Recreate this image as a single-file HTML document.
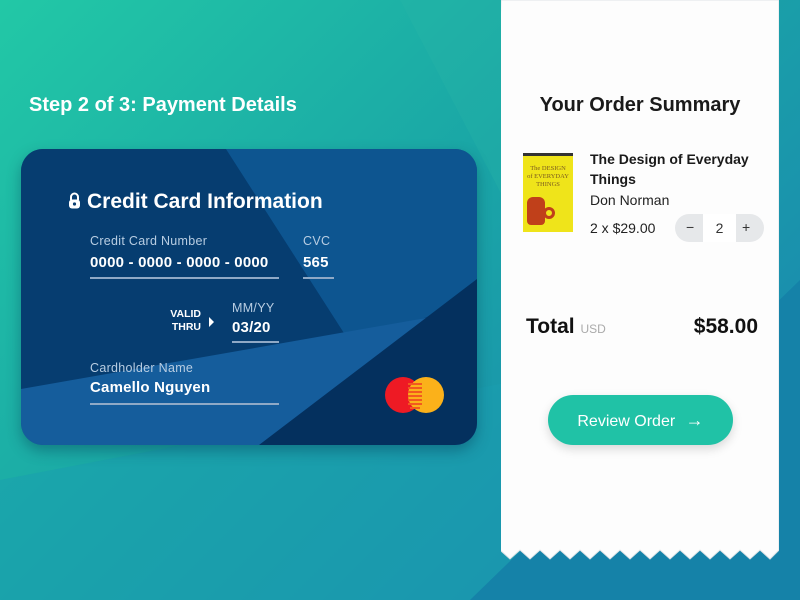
<!DOCTYPE html>
<html><head><meta charset="utf-8"><style>
*{margin:0;padding:0;box-sizing:border-box}
body{width:800px;height:600px;overflow:hidden;position:relative;font-family:"Liberation Sans",sans-serif;background:linear-gradient(135deg,#22c8a6 0%,#1aa6a6 45%,#1a8eae 80%,#1580a8 100%)}
.abs{position:absolute}
.t{color:#fff}
.lbl{font-size:12.5px;color:#b8cde2;letter-spacing:.3px}
.val{font-size:15px;font-weight:bold;color:#fff;letter-spacing:.2px}
.line{height:2px;background:#8fa9c6}
</style></head><body>
<svg class="abs" style="left:0;top:0" width="800" height="600">
<polygon points="400,0 520,0 520,230" fill="#2ab9a8" opacity=".25"/>
<polygon points="0,480 520,380 520,600 0,600" fill="#1a9db0" opacity=".5"/>
<polygon points="470,600 800,280 800,600" fill="#1582a8"/>
</svg>
<div class="abs t" style="left:29px;top:94px;font-size:20px;font-weight:bold">Step 2 of 3: Payment Details</div>
<div class="abs" style="left:21px;top:149px;width:456px;height:296px;border-radius:22px;overflow:hidden;box-shadow:0 6px 14px rgba(0,40,70,.35)">
<svg width="456" height="296" class="abs" style="left:0;top:0">
<rect width="456" height="296" fill="#0c4880"/>
<polygon points="0,0 205,0 330,195 0,245" fill="#063d70"/>
<polygon points="205,0 456,0 456,150 330,195" fill="#0d5590"/>
<polygon points="0,240 456,160 456,296 0,296" fill="#155d9c"/>
<polygon points="456,130 456,296 238,296" fill="#04305e"/>
</svg>
<div class="abs t" style="left:47px;top:41px;font-size:21px;font-weight:bold">
<svg width="13" height="17" viewBox="0 0 13 17" style="vertical-align:-1px;margin-right:6px"><path d="M3 8V5a3.5 3.5 0 0 1 7 0v3" stroke="#fff" stroke-width="2" fill="none"/><rect x="1" y="7.5" width="11" height="9" rx="3" fill="#fff"/><circle cx="6.5" cy="12" r="1.6" fill="#0a3e72"/></svg>Credit Card Information</div>
<div class="abs lbl" style="left:69px;top:85px">Credit Card Number</div>
<div class="abs val" style="left:69px;top:105px">0000 - 0000 - 0000 - 0000</div>
<div class="abs line" style="left:69px;top:128px;width:189px"></div>
<div class="abs lbl" style="left:282px;top:85px">CVC</div>
<div class="abs val" style="left:282px;top:105px">565</div>
<div class="abs line" style="left:282px;top:128px;width:31px"></div>
<div class="abs t" style="left:140px;top:159px;font-size:10.5px;font-weight:bold;text-align:right;width:40px;line-height:13px">VALID<br>THRU</div>
<div class="abs" style="left:188px;top:168px;width:0;height:0;border-left:5px solid #fff;border-top:5px solid transparent;border-bottom:5px solid transparent"></div>
<div class="abs lbl" style="left:211px;top:152px">MM/YY</div>
<div class="abs val" style="left:211px;top:170px">03/20</div>
<div class="abs line" style="left:211px;top:192px;width:47px"></div>
<div class="abs lbl" style="left:69px;top:212px">Cardholder Name</div>
<div class="abs val" style="left:69px;top:230px">Camello Nguyen</div>
<div class="abs line" style="left:69px;top:254px;width:189px"></div>
<svg class="abs" style="left:364px;top:227px" width="60" height="38"><circle cx="18" cy="19" r="18" fill="#ee1a24"/><circle cx="41" cy="19" r="18" fill="#fbb11a"/><g stroke="#f25a1f" stroke-width="2"><line x1="23" y1="8" x2="37" y2="8"/><line x1="23" y1="12" x2="37" y2="12"/><line x1="23" y1="16" x2="37" y2="16"/><line x1="23" y1="20" x2="37" y2="20"/><line x1="23" y1="24" x2="37" y2="24"/><line x1="23" y1="28" x2="37" y2="28"/><line x1="25" y1="32" x2="35" y2="32"/></g></svg>
</div>
<svg class="abs" style="left:501px;top:0" width="278" height="562"><path d="M0 0H278V550 l-9 9 l-10 -9 l-10 9 l-10 -9 l-10 9 l-10 -9 l-10 9 l-10 -9 l-10 9 l-10 -9 l-10 9 l-10 -9 l-10 9 l-10 -9 l-10 9 l-10 -9 l-10 9 l-10 -9 l-10 9 l-10 -9 l-10 9 l-10 -9 l-10 9 l-10 -9 l-10 9 l-10 -9 l-10 9 l-10 -9 l-10 9 l-9 -9Z" fill="#fdfdfd" stroke="#dfe3e6" stroke-width="1"/></svg>
<div class="abs" style="left:501px;top:94px;width:278px;text-align:center;font-size:20px;font-weight:bold;color:#1a1a1a">Your Order Summary</div>
<div class="abs" style="left:523px;top:153px;width:50px;height:79px;background:#efe41a;overflow:hidden">
<div style="height:3px;background:#333"></div>
<div style="font-family:'Liberation Serif',serif;font-size:6.5px;color:#7a5a20;text-align:center;line-height:8px;margin-top:9px">The DESIGN<br>of EVERYDAY<br>THINGS</div>
<div class="abs" style="left:4px;top:44px;width:18px;height:28px;background:#c0401a;border-radius:6px 6px 4px 4px"></div>
<div class="abs" style="left:20px;top:54px;width:12px;height:12px;border:3px solid #c0401a;border-radius:50%"></div></div>
<div class="abs" style="left:590px;top:149px;font-size:14px;font-weight:bold;line-height:20px;color:#1a1a1a">The Design of Everyday<br>Things</div>
<div class="abs" style="left:590px;top:192px;font-size:14px;color:#222">Don Norman</div>
<div class="abs" style="left:590px;top:220px;font-size:14px;color:#222">2 x $29.00</div>
<div class="abs" style="left:675px;top:214px;width:89px;height:28px;border-radius:14px;background:#e6e8ea;font-size:14px;color:#333">
<span class="abs" style="left:11px;top:5px">−</span><div class="abs" style="left:28px;top:0;width:33px;height:28px;background:#fff;text-align:center;line-height:28px">2</div><span class="abs" style="left:67px;top:5px">+</span></div>
<div class="abs" style="left:526px;top:315px;font-size:21px;font-weight:bold;color:#111">Total <span style="font-size:12px;color:#aaa;font-weight:normal">USD</span></div>
<div class="abs" style="left:640px;top:315px;width:118px;text-align:right;font-size:21px;font-weight:bold;color:#111">$58.00</div>
<div class="abs t" style="left:548px;top:395px;width:185px;height:50px;border-radius:25px;background:#20c2a6;box-shadow:0 4px 10px rgba(0,0,0,.15);text-align:center;line-height:50px;font-size:16px">Review Order <span style="font-size:18px;margin-left:6px">→</span></div>
</body></html>
